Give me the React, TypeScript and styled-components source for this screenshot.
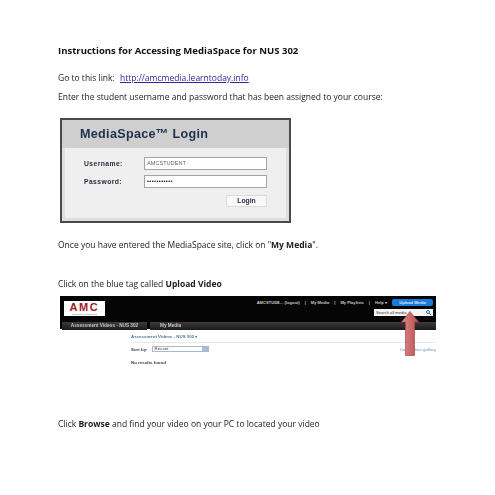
import styled, { createGlobalStyle } from "styled-components";

const Global = createGlobalStyle`
  html, body {
    margin: 0;
    padding: 0;
    background: #fff;
  }
  body {
    font-family: "Open Sans", "Liberation Sans", sans-serif;
    color: #1c1c1c;
  }
`;

const Page = styled.div`
  width: 495px;
  height: 495px;
  box-sizing: border-box;
  padding: 44px 0 0 58px;
  overflow: hidden;
  filter: blur(0.3px);
`;

const Heading = styled.h1`
  margin: 0 0 15px;
  font-size: 9.55px;
  line-height: 13px;
  font-weight: 700;
  color: #111;
`;

const Line = styled.p<{ $after: number }>`
  margin: 0 0 ${(p) => p.$after}px;
  font-size: 8.5px;
  line-height: 12px;
  white-space: nowrap;
`;

const Link = styled.a`
  margin-left: 3px;
  color: #2a2a9c;
  text-decoration: underline;
`;

const LoginShot = styled.div`
  width: 231px;
  height: 105px;
  margin: 0 0 16px 2px;
  box-sizing: border-box;
  border: 2px solid #4a4a4a;
  background: #efefef;
  display: flex;
  flex-direction: column;
`;

const LoginHead = styled.div`
  height: 28px;
  flex: none;
  display: flex;
  align-items: center;
  padding-left: 18px;
  background: #cfcfcf;
  color: #1f2f4d;
  font: 700 12.6px "Liberation Sans", sans-serif;
  letter-spacing: 0.3px;
`;

const LoginBody = styled.div`
  flex: 1;
  padding: 9px 19px 0 19px;
  display: flex;
  flex-direction: column;
  gap: 5px;
  border: 3px solid #dedede;
  border-top: 0;
`;

const FieldRow = styled.div`
  display: flex;
  align-items: center;
  justify-content: space-between;
  font: 700 6.8px "Liberation Sans", sans-serif;
  letter-spacing: 0.4px;
  color: #26303f;
`;

const Field = styled.div<{ $secret?: boolean }>`
  width: 123px;
  height: 13px;
  box-sizing: border-box;
  padding-left: 2px;
  border: 1px solid #a4a4a4;
  background: #fff;
  color: ${(p) => (p.$secret ? "#111" : "#666")};
  font: ${(p) => (p.$secret ? 700 : 400)} 5.6px/10px "Liberation Sans", sans-serif;
  letter-spacing: ${(p) => (p.$secret ? "0.4px" : "0")};
`;

const LoginButton = styled.div`
  align-self: flex-end;
  width: 39px;
  height: 10px;
  margin-top: 2px;
  background: #f8f8f8;
  border: 1px solid #dcdcdc;
  text-align: center;
  font: 700 6.8px/10px "Liberation Sans", sans-serif;
  color: #26303f;
`;

const SiteShot = styled.div`
  position: relative;
  width: 376px;
  height: 92px;
  margin: 0 0 30px 2px;
  font-family: "Liberation Sans", sans-serif;
`;

const SiteHeader = styled.div`
  height: 33px;
  box-sizing: border-box;
  background: #050505;
  display: flex;
  flex-direction: column;
  padding-bottom: 1px;
`;

const TopBar = styled.div`
  height: 23px;
  flex: none;
  display: flex;
  justify-content: space-between;
  padding: 3px 3px 0 4px;
`;

const Logo = styled.div`
  width: 41px;
  height: 15px;
  margin-top: 2px;
  background: #fff;
  color: #a01c22;
  text-align: center;
  font: 900 11px/12px "Liberation Sans", sans-serif;
  letter-spacing: 1.6px;
`;

const LogoTag = styled.div`
  color: #666;
  font-size: 2.4px;
  font-weight: 400;
  line-height: 3px;
  letter-spacing: 0;
`;

const TopRight = styled.div`
  display: flex;
  flex-direction: column;
  align-items: flex-end;
  gap: 3px;
`;

const NavRow = styled.div`
  display: flex;
  align-items: center;
  gap: 5px;
  font-size: 4.1px;
  font-weight: 700;
  color: #c9c9c9;
`;

const UploadButton = styled.div`
  width: 41px;
  height: 7px;
  border-radius: 2px;
  background: #1b79d8;
  color: #d5e8fb;
  text-align: center;
  line-height: 7px;
`;

const SearchBox = styled.div`
  width: 59px;
  height: 7px;
  box-sizing: border-box;
  padding-left: 2px;
  display: flex;
  justify-content: space-between;
  align-items: center;
  background: #f4f4f4;
  color: #333;
  font-size: 4.1px;
`;

const SearchIcon = styled.svg`
  width: 5px;
  height: 5px;
  margin-right: 2px;
`;

const TabBar = styled.div`
  flex: 1;
  display: flex;
  gap: 3px;
  padding-left: 2px;
`;

const Tab = styled.div<{ $grow?: boolean }>`
  width: ${(p) => (p.$grow ? "auto" : "85px")};
  flex: ${(p) => (p.$grow ? 1 : "none")};
  box-sizing: border-box;
  padding-left: ${(p) => (p.$grow ? 10 : 0)}px;
  background: linear-gradient(#3c3c3c, #1a1a1a);
  color: #c8c8c8;
  text-align: ${(p) => (p.$grow ? "left" : "center")};
  font-size: 4.7px;
  font-weight: 700;
  line-height: 8px;
`;

const Content = styled.div`
  padding: 4px 0 0 71px;
  font-size: 4.4px;
  font-weight: 700;
  color: #3c3c3c;
`;

const Crumb = styled.div`
  padding: 1px 0 3px;
  border-bottom: 1px solid #e8e8e8;
  color: #4d7693;
`;

const SortRow = styled.div`
  display: flex;
  justify-content: space-between;
  align-items: center;
  margin-top: 3px;
`;

const SortLeft = styled.div`
  display: flex;
  align-items: center;
  gap: 4px;
`;

const SortSelect = styled.div`
  width: 57px;
  height: 6px;
  box-sizing: border-box;
  padding-left: 2px;
  display: flex;
  justify-content: space-between;
  border: 1px solid #a9b8cc;
  font-weight: 400;
  line-height: 4px;

  &::after {
    content: "";
    width: 6px;
    background: #a9bdd6;
  }
`;

const GalleryLink = styled.div`
  color: #6d97ad;
  font-weight: 400;
`;

const NoResults = styled.div`
  margin-top: 8px;
`;

const ArrowOverlay = styled.svg`
  position: absolute;
  top: 15px;
  left: 341px;
  width: 18px;
  height: 45px;
`;

const App = () => (
  <>
    <Global />
    <Page>
      <Heading>Instructions for Accessing MediaSpace for NUS 302</Heading>
      <Line $after={7}>
        Go to this link: <Link>http://amcmedia.learntoday.info</Link>
      </Line>
      <Line $after={15}>Enter the student username and password that has been assigned to your course:</Line>
      <LoginShot>
        <LoginHead>MediaSpace™ Login</LoginHead>
        <LoginBody>
          <FieldRow>
            Username:
            <Field>AMCSTUDENT</Field>
          </FieldRow>
          <FieldRow>
            Password:
            <Field $secret>•••••••••••</Field>
          </FieldRow>
          <LoginButton>Login</LoginButton>
        </LoginBody>
      </LoginShot>
      <Line $after={27}>
        Once you have entered the MediaSpace site, click on "<b>My Media</b>".
      </Line>
      <Line $after={6}>
        Click on the blue tag called <b>Upload Video</b>
      </Line>
      <SiteShot>
        <SiteHeader>
          <TopBar>
            <Logo>
              AMC
              <LogoTag>Training &amp; Assessment</LogoTag>
            </Logo>
            <TopRight>
              <NavRow>
                <span>AMCSTUDE... (logout)</span>
                <span>|</span>
                <span>My Media</span>
                <span>|</span>
                <span>My Playlists</span>
                <span>|</span>
                <span>Help ▾</span>
                <UploadButton>Upload Media</UploadButton>
              </NavRow>
              <SearchBox>
                Search all media
                <SearchIcon viewBox="0 0 10 10">
                  <circle cx="4" cy="4" r="3" fill="none" stroke="#3f6f9c" strokeWidth="2" />
                  <path d="M6 6l4 4" stroke="#3f6f9c" strokeWidth="2" />
                </SearchIcon>
              </SearchBox>
            </TopRight>
          </TopBar>
          <TabBar>
            <Tab>Assessment Videos - NUS 302</Tab>
            <Tab $grow>My Media</Tab>
          </TabBar>
        </SiteHeader>
        <Content>
          <Crumb>Assessment Videos - NUS 302 ▾</Crumb>
          <SortRow>
            <SortLeft>
              Sort by:
              <SortSelect>Recent</SortSelect>
            </SortLeft>
            <GalleryLink>Description gallery</GalleryLink>
          </SortRow>
          <NoResults>No results found</NoResults>
        </Content>
        <ArrowOverlay viewBox="0 0 18 45">
          <defs>
            <linearGradient id="arrowFill" x1="0" x2="1" y1="0" y2="0">
              <stop offset="0" stopColor="#d98a8a" />
              <stop offset="1" stopColor="#b94f50" />
            </linearGradient>
          </defs>
          <path
            d="M9 0.5 L17.5 11 H13.5 V44.5 H4.5 V11 H0.5 Z"
            fill="url(#arrowFill)"
            stroke="#a84a4c"
            strokeWidth="0.7"
          />
        </ArrowOverlay>
      </SiteShot>
      <Line $after={0}>
        Click <b>Browse</b> and find your video on your PC to located your video
      </Line>
    </Page>
  </>
);

export default App;
